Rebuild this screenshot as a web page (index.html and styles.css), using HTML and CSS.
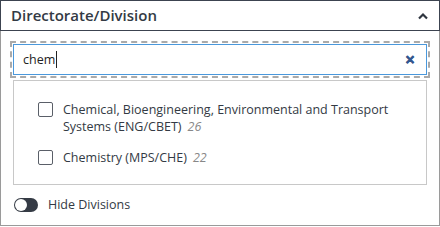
FILE: index.html
```html
<!DOCTYPE html>
<html lang="en">
<head>
    <meta charset="UTF-8">
    <meta name="viewport" content="width=device-width, initial-scale=1.0">
    <title>Directorate/Division</title>
    <link rel="stylesheet" href="styles.css">
</head>
<body>
    <div class="filter">
        <div class="filter-header">
            <span>Directorate/Division</span>
            <svg class="chevron" width="12" height="8" viewBox="0 0 12 8">
                <path d="M2 6.5 L6 2.5 L10 6.5" fill="none" stroke="#2f3640" stroke-width="2.2"/>
            </svg>
        </div>
        <div class="filter-body">
            <div class="search-wrap">
                <div class="search">
                    <span class="search-text">chem</span><span class="caret"></span>
                    <span class="clear">&#x2715;</span>
                </div>
            </div>
            <div class="options">
                <label class="option">
                    <span class="box"></span>
                    <span class="option-text">Chemical, Bioengineering, Environmental and Transport Systems (ENG/CBET)<i class="count">26</i></span>
                </label>
                <label class="option">
                    <span class="box"></span>
                    <span class="option-text">Chemistry (MPS/CHE)<i class="count">22</i></span>
                </label>
            </div>
            <div class="toggle-row">
                <span class="toggle"><span class="knob"></span></span>
                <span>Hide Divisions</span>
            </div>
        </div>
    </div>
</body>
</html>
```

FILE: styles.css
```css
body {
    font-family: "Open Sans", "Noto Sans", sans-serif;
    margin: 0;
    padding: 0;
    background: #fff;
    color: #333a44;
}
.filter {
    width: 440px;
    height: 226px;
    box-sizing: border-box;
    border: 1px solid #9a9a9a;
    border-top: 0;
}
.filter-header {
    height: 31px;
    box-sizing: border-box;
    margin: 0 -1px;
    border: 1px solid #3c4350;
    display: flex;
    align-items: center;
    justify-content: space-between;
    padding: 0 10px 0 10px;
    font-size: 15px;
    font-weight: 600;
}
.filter-header span {
    margin-top: -1px;
}
.filter-body {
    padding: 13px 12px 0 12px;
}
.search-wrap {
    outline: 2px dashed #aaa;
    outline-offset: 1px;
}
.search {
    height: 31px;
    box-sizing: border-box;
    border: 1px solid #4a98dc;
    display: flex;
    align-items: center;
    padding: 0 11px 0 9px;
    font-size: 12.5px;
    color: #222;
}
.caret {
    width: 1px;
    height: 17px;
    background: #222;
    margin-left: 1px;
}
.clear {
    margin-left: auto;
    color: #33578f;
    font-size: 12px;
    font-weight: 700;
    -webkit-text-stroke: 0.6px #33578f;
}
.options {
    margin-top: 5px;
    height: 105px;
    box-sizing: border-box;
    border: 1px solid #c8c8c8;
    padding: 20px 24px 0 24px;
}
.option {
    display: flex;
    align-items: flex-start;
    font-size: 12.5px;
    line-height: 17px;
    color: #333a44;
    margin-bottom: 14px;
}
.box {
    flex: none;
    width: 15px;
    height: 15px;
    box-sizing: border-box;
    border: 1px solid #5a5f68;
    border-radius: 2px;
    margin: 1px 10px 0 0;
}
.option-text {
    max-width: 340px;
}
.count {
    color: #888;
    margin-left: 6px;
}
.toggle-row {
    display: flex;
    align-items: center;
    margin-top: 11px;
    font-size: 12.5px;
    color: #333a44;
}
.toggle {
    width: 24px;
    height: 14px;
    border-radius: 7px;
    background: #353b45;
    margin: 0 10px 0 1px;
    position: relative;
}
.knob {
    position: absolute;
    left: 1px;
    top: 1px;
    width: 12px;
    height: 12px;
    border-radius: 50%;
    background: #fff;
}
```
